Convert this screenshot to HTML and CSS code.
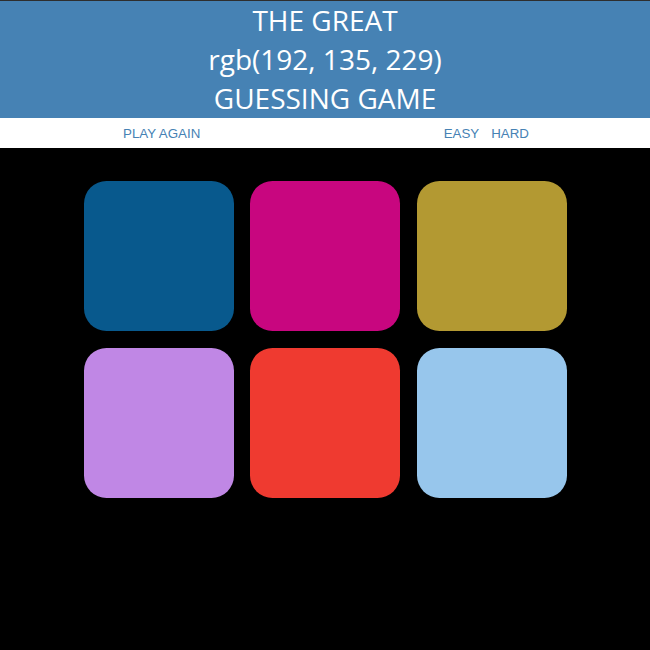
FILE: index.html
```html
<!DOCTYPE html>
<html>
<head>
<meta charset="utf-8">
<link rel="stylesheet" href="styles.css">
</head>
<body>
<h1 class="title">THE GREAT<br><span class="rgb">rgb(192, 135, 229)</span><br>GUESSING GAME</h1>
<div class="stripe">
  <button class="btn reset">PLAY AGAIN</button>
  <span class="message"></span>
  <div class="modes">
    <button class="btn">EASY</button>
    <button class="btn">HARD</button>
  </div>
</div>
<div class="container">
  <div class="square" style="background: rgb(8, 89, 141)"></div>
  <div class="square" style="background: rgb(200, 6, 127)"></div>
  <div class="square" style="background: rgb(179, 153, 50)"></div>
  <div class="square" style="background: rgb(192, 135, 229)"></div>
  <div class="square" style="background: rgb(239, 58, 48)"></div>
  <div class="square" style="background: rgb(151, 198, 236)"></div>
</div>
</body>
</html>
```
FILE: styles.css
```css
html, body {
  margin: 0;
  padding: 0;
}
body {
  background: #000;
  border-top: 1px solid #2e2e2e;
  height: 649px;
  overflow: hidden;
}
.title {
  margin: 0;
  background: steelblue;
  color: #fff;
  text-align: center;
  font-family: "Open Sans", sans-serif;
  font-weight: normal;
  font-size: 28px;
  line-height: 39px;
  height: 117px;
}
.stripe {
  background: #fff;
  height: 30px;
  display: flex;
  align-items: center;
  width: 500px;
  margin: 0 auto;
  box-shadow: 0 0 0 100vw #fff;
  clip-path: inset(0 -100vw);
}
.btn {
  border: none;
  background: none;
  color: steelblue;
  font-family: "Liberation Sans", Arial, sans-serif;
  font-size: 13.333px;
  padding: 0 6px;
  margin: 0;
  height: 30px;
  letter-spacing: 0;
}
.reset {
  margin-left: 42px;
}
.message {
  flex: 1;
}
.modes {
  display: flex;
  margin-right: 40px;
}
.container {
  width: 500px;
  margin: 25px auto 0;
  padding-left: 1px;
  display: flex;
  flex-wrap: wrap;
}
.square {
  width: 150px;
  height: 150px;
  margin: 8.3px;
  border-radius: 15%;
}
```
